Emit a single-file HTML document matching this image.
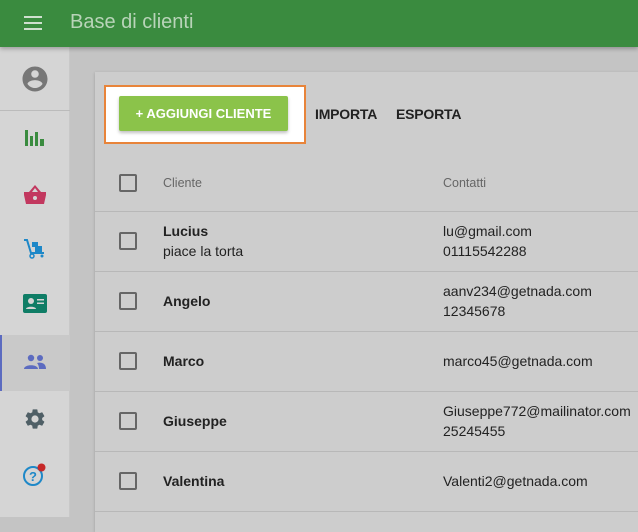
<!DOCTYPE html>
<html><head><meta charset="utf-8"><style>
*{margin:0;padding:0;box-sizing:border-box}
body{width:638px;height:517px;overflow:hidden;background:#c4c4c4;font-family:"Liberation Sans",Roboto,sans-serif;position:relative}
.hdr{position:absolute;left:0;top:0;width:638px;height:47px;background:#3a8b3f;box-shadow:0 2px 4px rgba(0,0,0,.25);z-index:2}
.hdr .t{position:absolute;left:70px;top:11px;font-size:20px;color:#b9d4b9}
.side{position:absolute;left:0;top:47px;width:70px;height:470px;background:#d5d5d5;border-right:1px solid #c8c8c8}
.ic{position:absolute;left:0;width:70px;display:flex;justify-content:center}
.card{position:absolute;left:95px;top:72px;width:560px;height:460px;background:#cdcdcd;box-shadow:0 1px 3px rgba(0,0,0,.2)}
.hl{position:absolute;left:104px;top:85px;width:202px;height:59px;background:#fff;border:2px solid #e8843a}
.btn{position:absolute;left:119px;top:96px;width:169px;height:35px;background:#8bc34a;color:#fff;font-weight:bold;font-size:13px;line-height:35px;text-align:center;border-radius:2px;box-shadow:0 2px 3px rgba(0,0,0,.25)}
.lnk{position:absolute;top:106px;font-size:14px;font-weight:bold;color:#222;letter-spacing:-.2px}
.cb{position:absolute;left:119px;width:18px;height:18px;border:2px solid #666;border-radius:2px}
.th{position:absolute;top:176px;font-size:12.5px;color:#666}
.line{position:absolute;left:95px;width:543px;height:1px;background:#b8b8b8}
.nm{position:absolute;left:163px;font-size:14px;font-weight:bold;color:#222}
.tx{position:absolute;font-size:14px;color:#222;line-height:20px}
</style></head><body>
<div class="hdr">
<svg style="position:absolute;left:24px;top:15px" width="20" height="16"><rect y="1" width="18" height="2" fill="#cfe0cf"/><rect y="7" width="18" height="2" fill="#cfe0cf"/><rect y="13" width="18" height="2" fill="#cfe0cf"/></svg>
<div class="t">Base di clienti</div></div>
<div class="side">
<div class="ic" style="top:17px"><svg width="30" height="30" viewBox="0 0 24 24"><path fill="#777" d="M12 2C6.48 2 2 6.48 2 12s4.48 10 10 10 10-4.48 10-10S17.52 2 12 2zm0 3c1.66 0 3 1.34 3 3s-1.34 3-3 3-3-1.34-3-3 1.34-3 3-3zm0 14.2c-2.5 0-4.71-1.28-6-3.22.03-1.99 4-3.08 6-3.08s5.970 1.09 6 3.08c-1.29 1.94-3.5 3.22-6 3.22z"/></svg></div>
<div style="position:absolute;left:0;top:63px;width:70px;height:1px;background:#bbb"></div>
<div class="ic" style="top:81px"><svg width="22" height="20"><rect x="1" y="2" width="3" height="16" fill="#3a8b3f"/><rect x="6" y="8" width="3" height="10" fill="#3a8b3f"/><rect x="11" y="4" width="3" height="14" fill="#3a8b3f"/><rect x="16" y="11" width="4" height="7" fill="#3a8b3f"/></svg></div>
<div class="ic" style="top:137px"><svg width="24" height="22" viewBox="0 0 24 22"><path fill="#c2385f" d="M12 1 6 8H1v3l2 9h18l2-9V8h-5zM9 8l3-4 3 4z"/><circle cx="12" cy="14" r="2" fill="#d5d5d5"/></svg></div>
<div class="ic" style="top:190px"><svg width="24" height="24" viewBox="0 0 24 24"><path fill="none" stroke="#1e88c8" stroke-width="2" d="M1 3h3l4 13h13"/><rect x="9" y="5" width="6" height="5" fill="#1e88c8"/><rect x="12" y="9" width="7" height="6" fill="#1e88c8"/><circle cx="9" cy="19" r="2" fill="none" stroke="#1e88c8" stroke-width="1.5"/><circle cx="19" cy="19" r="1.5" fill="#1e88c8"/></svg></div>
<div class="ic" style="top:247px"><svg width="24" height="19"><rect width="24" height="19" rx="2" fill="#0f7d66"/><circle cx="8" cy="7" r="3" fill="#d5d5d5"/><path d="M3 15c0-3 10-3 10 0z" fill="#d5d5d5"/><rect x="14" y="5" width="7" height="1.5" fill="#d5d5d5"/><rect x="14" y="8.5" width="7" height="1.5" fill="#d5d5d5"/></svg></div>
<div style="position:absolute;left:0;top:288px;width:70px;height:56px;background:#c9c9c9;border-left:2px solid #5c6bc0"></div>
<div class="ic" style="top:306px"><svg width="24" height="18" viewBox="0 0 24 18"><circle cx="8" cy="5" r="3.2" fill="#5c6bc0"/><circle cx="17" cy="5" r="3" fill="#5c6bc0"/><path fill="#5c6bc0" d="M1 16c0-5 14-5 14 0zM14 10c4-1 9 0 9 6h-7c0-3-1-5-2-6z"/></svg></div>
<div class="ic" style="top:360px"><svg width="24" height="24" viewBox="0 0 24 24"><path fill="#4f5f66" d="M19.14 12.94c.04-.3.06-.61.06-.94s-.02-.64-.07-.94l2.03-1.58a.49.49 0 0 0 .12-.61l-1.92-3.32a.49.49 0 0 0-.59-.22l-2.39.96c-.5-.38-1.03-.7-1.620-.94l-.36-2.54a.48.48 0 0 0-.48-.41h-3.84c-.24 0-.43.17-.47.41l-.36 2.54c-.59.24-1.13.57-1.62.94l-2.39-.96a.48.48 0 0 0-.59.22L2.74 8.87c-.12.21-.08.47.12.61l2.03 1.58c-.05.3-.09.63-.09.94s.2.64.07.94l-2.03 1.58a.49.49 0 0 0-.12.61l1.92 3.32c.12.22.37.29.59.22l2.39-.96c.5.38 1.03.7 1.62.94l.36 2.54c.05.24.24.41.48.41h3.84c.24 0 .44-.17.47-.41l.36-2.54c.59-.24 1.13-.56 1.62-.94l2.39.96c.22.08.47 0 .59-.22l1.92-3.32c.12-.22.07-.47-.12-.61zM12 15.6A3.6 3.6 0 1 1 12 8.4a3.6 3.6 0 0 1 0 7.2z"/></svg></div>
<div class="ic" style="top:415px"><svg width="26" height="26" viewBox="0 0 26 26"><circle cx="11" cy="14" r="9" fill="none" stroke="#1e88c8" stroke-width="2"/><text x="11" y="19" text-anchor="middle" font-size="13" font-weight="bold" fill="#1e88c8" font-family="Liberation Sans">?</text><circle cx="19.5" cy="5.5" r="4" fill="#c62828"/></svg></div>
</div>
<div class="card"></div>
<div class="hl"></div>
<div class="btn">+ AGGIUNGI CLIENTE</div>
<div class="lnk" style="left:315px">IMPORTA</div>
<div class="lnk" style="left:396px">ESPORTA</div>
<div class="cb" style="top:174px"></div>
<div class="th" style="left:163px">Cliente</div>
<div class="th" style="left:443px">Contatti</div>
<div class="line" style="top:211px"></div>
<div class="line" style="top:271px"></div>
<div class="line" style="top:331px"></div>
<div class="line" style="top:391px"></div>
<div class="line" style="top:451px"></div>
<div class="line" style="top:511px"></div>
<div class="cb" style="top:232px"></div>
<div class="nm" style="top:223px">Lucius</div>
<div class="tx" style="left:163px;top:241px">piace la torta</div>
<div class="tx" style="left:443px;top:221px">lu@gmail.com<br>01115542288</div>
<div class="cb" style="top:292px"></div>
<div class="nm" style="top:293px">Angelo</div>
<div class="tx" style="left:443px;top:281px">aanv234@getnada.com<br>12345678</div>
<div class="cb" style="top:352px"></div>
<div class="nm" style="top:353px">Marco</div>
<div class="tx" style="left:443px;top:351px">marco45@getnada.com</div>
<div class="cb" style="top:412px"></div>
<div class="nm" style="top:413px">Giuseppe</div>
<div class="tx" style="left:443px;top:401px">Giuseppe772@mailinator.com<br>25245455</div>
<div class="cb" style="top:472px"></div>
<div class="nm" style="top:473px">Valentina</div>
<div class="tx" style="left:443px;top:471px">Valenti2@getnada.com</div>
</body></html>
